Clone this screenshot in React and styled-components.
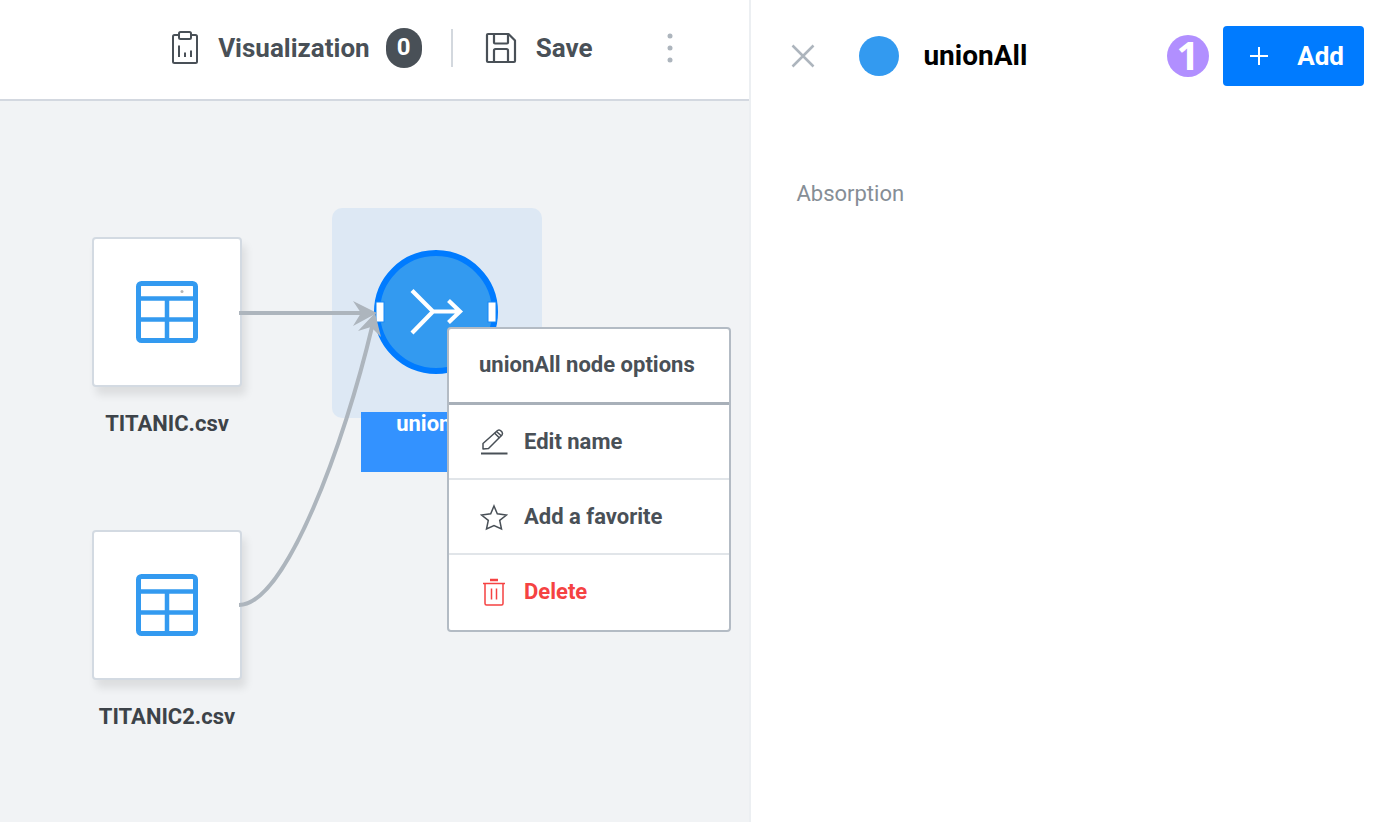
import React from 'react';
import styled, { createGlobalStyle } from 'styled-components';

const GlobalStyle = createGlobalStyle`
  *, *::before, *::after { box-sizing: border-box; }
  body {
    margin: 0;
    background: #fff;
    color: #495057;
    font-family: Roboto, "Liberation Sans", sans-serif;
  }
  button { font: inherit; color: inherit; margin: 0; padding: 0; border: 0; background: none; cursor: pointer; }
  h2, h3, p, ul { margin: 0; padding: 0; }
  svg { display: block; flex: none; }
`;

const Page = styled.div`
  display: grid;
  grid-template-columns: minmax(0, 1fr) 46.2%;
  min-height: 100vh;
`;

const Workspace = styled.main`
  display: flex;
  flex-direction: column;
  min-width: 0;
`;

const Toolbar = styled.header`
  display: flex;
  align-items: center;
  justify-content: flex-end;
  height: 101px;
  padding: 0 59px 4px 0;
  background: #fff;
  border-bottom: 2px solid #d3d8e0;
`;

const ToolButton = styled.button`
  display: flex;
  align-items: center;
  font-size: 26px;
  line-height: 40px;
  font-weight: 700;

  svg { margin-right: 19px; }
`;

const Count = styled.span`
  width: 36px;
  height: 40px;
  margin-left: 16px;
  border-radius: 18px;
  background: #495057;
  color: #fff;
  font-size: 24px;
  line-height: 38px;
  font-weight: 700;
  text-align: center;
`;

const Separator = styled.span`
  width: 2px;
  height: 38px;
  margin: 0 32px 0 29px;
  background: #d3d8de;
`;

const MoreButton = styled.button`
  display: flex;
  justify-content: center;
  width: 40px;
  margin-left: 58px;
`;

const Canvas = styled.section`
  position: relative;
  flex: 1;
  min-height: 680px;
  overflow: hidden;
  background: #f1f3f5;
`;

const Edges = styled.svg`
  position: absolute;
  left: 0;
  top: 0;
  pointer-events: none;
`;

const SourceNode = styled.div`
  position: absolute;
  left: 92px;
  top: ${(p) => p.$top}px;
  width: 150px;
`;

const SourceBox = styled.div`
  display: flex;
  align-items: center;
  justify-content: center;
  height: 150px;
  border: 2px solid #d3dae2;
  border-radius: 4px;
  background: #fff;
  box-shadow: 4px 8px 8px rgba(0, 0, 0, 0.09);
`;

const NodeLabel = styled.p`
  margin-top: 24px;
  color: #3d4349;
  font-size: 22px;
  line-height: 26px;
  font-weight: 700;
  text-align: center;
`;

const SelectedNode = styled.div`
  position: absolute;
  left: 332px;
  top: 107px;
  width: 210px;
`;

const Halo = styled.div`
  display: flex;
  align-items: center;
  justify-content: center;
  height: 210px;
  padding: 0 2px 2px 0;
  border-radius: 10px;
  background: #dde8f4;
`;

const NodeName = styled.p`
  width: 152px;
  height: 60px;
  margin: -6px auto 0;
  background: #3392ff;
  color: #fff;
  font-size: 22px;
  line-height: 24px;
  font-weight: 700;
  text-align: center;
`;

const Menu = styled.div`
  position: absolute;
  left: 447px;
  top: 226px;
  width: 284px;
  border: 2px solid #b3bbc4;
  border-radius: 4px;
  background: #fff;
  color: #495057;
  font-size: 22px;
  line-height: 26px;
`;

const MenuTitle = styled.h3`
  padding: 23px 30px 24px;
  border-bottom: 3px solid #a8b0b9;
  font-size: 22px;
  line-height: 26px;
  font-weight: 700;
  white-space: nowrap;
`;

const MenuList = styled.ul`
  padding-bottom: 2px;
  list-style: none;
`;

const MenuItem = styled.li`
  & + & { border-top: 2px solid #e1e5e9; }
`;

const MenuButton = styled.button`
  display: flex;
  align-items: center;
  gap: 16px;
  width: 100%;
  height: 73px;
  padding: 0 31px;
  color: ${(p) => (p.$danger ? '#f54242' : 'inherit')};
  font-weight: 700;
  text-align: left;
`;

const Panel = styled.aside`
  min-width: 0;
  padding: 26px 29px 26px 40px;
  border-left: 2px solid #eceff2;
  background: #fff;
`;

const PanelHeader = styled.header`
  display: flex;
  align-items: center;
  height: 60px;
`;

const CloseButton = styled.button`
  display: flex;
`;

const Dot = styled.span`
  width: 40px;
  height: 40px;
  margin: 0 24px 0 44px;
  border-radius: 50%;
  background: #339af0;
`;

const PanelTitle = styled.h2`
  color: #000;
  font-size: 28px;
  line-height: 32px;
  font-weight: 700;
`;

const Step = styled.span`
  width: 42px;
  height: 42px;
  margin: 0 14px 0 auto;
  border-radius: 50%;
  background: #b18fff;
  color: #fff;
  font-family: "Noto Sans", sans-serif;
  font-size: 40px;
  line-height: 40px;
  font-weight: 700;
  text-align: center;
`;

const AddButton = styled.button`
  display: flex;
  align-items: center;
  justify-content: space-between;
  width: 141px;
  height: 60px;
  padding: 0 20px 0 26px;
  border-radius: 4px;
  background: #007bff;
  color: #fff;
  font-size: 26px;
  font-weight: 700;
`;

const PanelText = styled.p`
  margin: 94px 0 0 5px;
  color: #868e96;
  font-size: 22px;
  line-height: 28px;
`;

const ClipboardIcon = () => (
  <svg width="28" height="36" viewBox="0 0 28 36" fill="none" stroke="#495057" strokeWidth="2" aria-hidden="true">
    <path d="M8 5H3.500Q2 5 2 6.500V31.500Q2 33 3.500 33H24.500Q26 33 26 31.500V6.500Q26 5 24.500 5H20" />
    <rect x="8" y="2" width="12" height="7" rx="1.500" />
    <path d="M8 15.500V27M14 22.500V27M20 20.500V27" />
  </svg>
);

const SaveIcon = () => (
  <svg width="32" height="32" viewBox="0 0 32 32" fill="none" stroke="#495057" strokeWidth="2.200" strokeLinejoin="round" aria-hidden="true">
    <path d="M3 2H23.500L30 8.500V29Q30 30 29 30H3Q2 30 2 29V3Q2 2 3 2Z" />
    <path d="M9 2V10.500Q9 11.500 10 11.500H22Q23 11.500 23 10.500V2M9 30V18.500Q9 17 10.500 17H21.500Q23 17 23 18.500V30" />
  </svg>
);

const MoreIcon = () => (
  <svg width="6" height="30" viewBox="0 0 6 30" fill="#adb5bd" aria-hidden="true">
    <circle cx="3" cy="3" r="2.500" /><circle cx="3" cy="15" r="2.500" /><circle cx="3" cy="27" r="2.500" />
  </svg>
);

const TableIcon = ({ marked }) => (
  <svg width="62" height="62" viewBox="0 0 62 62" fill="none" stroke="#339af0" aria-hidden="true">
    <rect x="2.500" y="2.500" width="57" height="57" rx="3" strokeWidth="5" />
    <path d="M3 17.500H59M3 38.500H59M31 17.500V59" strokeWidth="4.500" />
    {marked && <circle cx="46" cy="10.500" r="1.500" fill="#b5b5b5" stroke="none" />}
  </svg>
);

const UnionIcon = () => (
  <svg width="126" height="126" viewBox="0 0 126 126" fill="none" aria-hidden="true">
    <circle cx="63" cy="63" r="59" fill="#339af0" stroke="#007bff" strokeWidth="6" />
    <path d="M39 41.500L60 62.500L39 84M60 62.500H88M75.500 51.500L87 62.500L75.500 73.500" stroke="#fff" strokeWidth="4.200" />
    <rect x="3" y="53" width="8" height="20" fill="#fff" stroke="#1688f7" />
    <rect x="115" y="53" width="8" height="20" fill="#fff" stroke="#1688f7" />
  </svg>
);

const EditIcon = () => (
  <svg width="28" height="28" viewBox="0 0 28 28" fill="none" stroke="#495057" strokeWidth="1.500" strokeLinejoin="round" aria-hidden="true">
    <path d="M3 21V15.500L17.500 2.500Q19 1.500 20.500 2.500L22 4Q23 5.500 22 7L8.500 20.500Z" />
    <path d="M14.500 5L19.500 10M16.500 3.500L21.500 8" />
    <path d="M1 25.500H27.500" strokeWidth="2" />
  </svg>
);

const StarIcon = () => (
  <svg width="28" height="28" viewBox="0 0 28 28" fill="none" stroke="#495057" strokeWidth="1.500" aria-hidden="true">
    <path d="M14 3L17.300 10.700L26.500 12L19.700 17.300L21.500 26L14 22.500L6.500 26L8.300 17.300L1.500 12L10.700 10.700Z" />
  </svg>
);

const TrashIcon = () => (
  <svg width="28" height="28" viewBox="0 0 28 28" fill="none" stroke="#f54242" strokeWidth="1.500" aria-hidden="true">
    <path d="M10 2H18" strokeWidth="2.500" />
    <path d="M3 5.500H25M5 5.500V25.500Q5 27 6.500 27H21.500Q23 27 23 25.500V5.500M11.500 10.500V21.500M16.500 10.500V21.500" />
  </svg>
);

const CloseIcon = () => (
  <svg width="24" height="24" viewBox="0 0 24 24" fill="none" stroke="#adb5bd" strokeWidth="2.500" aria-hidden="true">
    <path d="M1.500 1.500L22.500 22.500M22.500 1.500L1.500 22.500" />
  </svg>
);

const PlusIcon = () => (
  <svg width="20" height="20" viewBox="0 0 20 20" fill="none" stroke="#fff" strokeWidth="2" aria-hidden="true">
    <path d="M10 1V19M1 10H19" />
  </svg>
);

const sources = [
  { name: 'TITANIC.csv', top: 136, marked: true },
  { name: 'TITANIC2.csv', top: 429, marked: false },
];

const actions = [
  { label: 'Edit name', Icon: EditIcon },
  { label: 'Add a favorite', Icon: StarIcon },
  { label: 'Delete', Icon: TrashIcon, danger: true },
];

export default function App() {
  return (
    <>
      <GlobalStyle />
      <Page>
        <Workspace>
          <Toolbar>
            <ToolButton type="button">
              <ClipboardIcon />
              <span>Visualization</span>
              <Count>0</Count>
            </ToolButton>
            <Separator />
            <ToolButton type="button">
              <SaveIcon />
              <span>Save</span>
            </ToolButton>
            <MoreButton type="button" aria-label="More options"><MoreIcon /></MoreButton>
          </Toolbar>
          <Canvas>
            {sources.map((s) => (
              <SourceNode key={s.name} $top={s.top}>
                <SourceBox><TableIcon marked={s.marked} /></SourceBox>
                <NodeLabel>{s.name}</NodeLabel>
              </SourceNode>
            ))}
            <SelectedNode>
              <Halo><UnionIcon /></Halo>
              <NodeName>unionAll</NodeName>
            </SelectedNode>
            <Edges width="560" height="560" viewBox="0 0 560 560" fill="none" aria-hidden="true">
              <path d="M239 212H362" stroke="#adb5bd" strokeWidth="4" />
              <path d="M239 504C286 504 345 340 372 226" stroke="#adb5bd" strokeWidth="4" />
              <path d="M377 212L353 200L361 212L353 225Z" fill="#adb5bd" />
              <path d="M375 212L358 230L371 226L381 236Z" fill="#adb5bd" />
            </Edges>
            <Menu>
              <MenuTitle>unionAll node options</MenuTitle>
              <MenuList>
                {actions.map(({ label, Icon, danger }) => (
                  <MenuItem key={label}>
                    <MenuButton type="button" $danger={danger}><Icon />{label}</MenuButton>
                  </MenuItem>
                ))}
              </MenuList>
            </Menu>
          </Canvas>
        </Workspace>
        <Panel>
          <PanelHeader>
            <CloseButton type="button" aria-label="Close"><CloseIcon /></CloseButton>
            <Dot />
            <PanelTitle>unionAll</PanelTitle>
            <Step>1</Step>
            <AddButton type="button"><PlusIcon />Add</AddButton>
          </PanelHeader>
          <PanelText>Absorption</PanelText>
        </Panel>
      </Page>
    </>
  );
}
